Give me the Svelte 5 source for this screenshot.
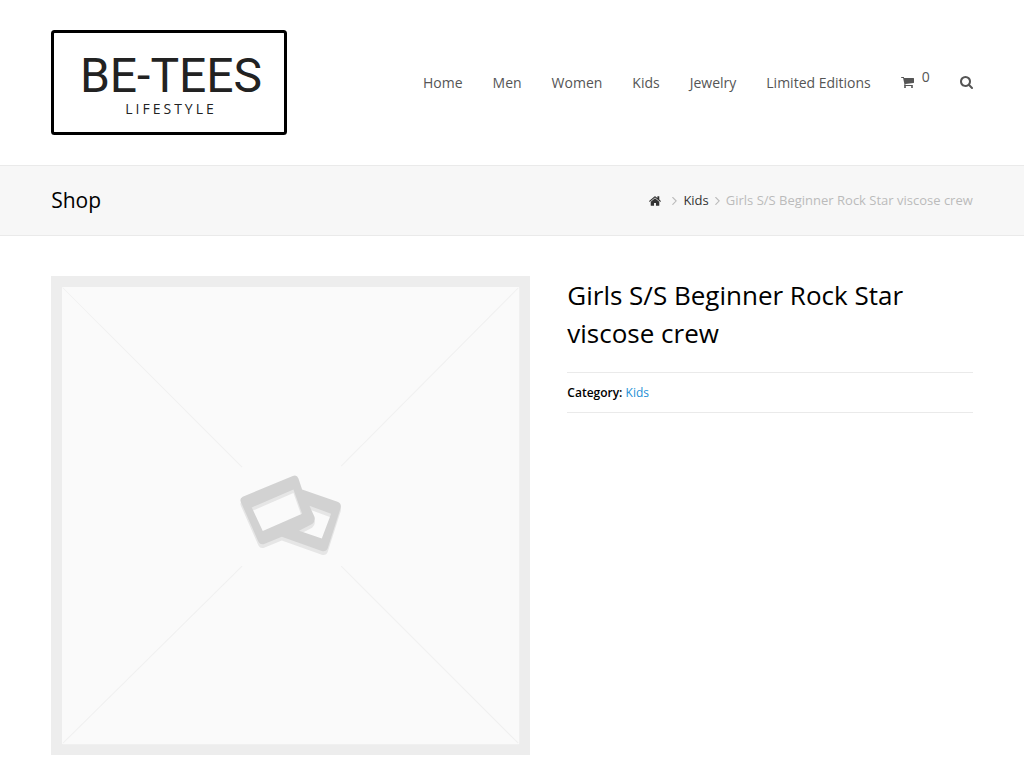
<script>
  const nav = ['Home', 'Men', 'Women', 'Kids', 'Jewelry', 'Limited Editions'];
  const product = 'Girls S/S Beginner Rock Star viscose crew';
  const cards =
    'M68 125L218 63Q230 58 235 70L246 103L352 140Q364 145 362 157L323 279Q318 291 305 288L185 245L134 266Q121 271 115 260L62 140Q58 130 68 125Z' +
    'M95 157L128 228L246 176L220 103Z' +
    'M268 152L283 185Q287 198 276 207L237 227L305 250L333 176Z';
</script>

{#snippet angle()}
  <svg class="angle" viewBox="589 484 582 975" aria-hidden="true"><path d="M1171 960q0 13-10 23l-466 466q-10 10-23 10t-23-10l-50-50q-10-10-10-23t10-23l393-393-393-393q-10-10-10-23t10-23l50-50q10-10 23-10t23 10l466 466q10 10 10 23z" /></svg>
{/snippet}

<header class="wrap header">
  <a class="logo" href="#home" aria-label="BE-TEES Lifestyle">
    <svg viewBox="0 0 236 105">
      <rect x="1.5" y="1.5" width="233" height="102" rx="2" fill="none" stroke="#000" stroke-width="3" />
      <text class="brand" x="120" y="62" text-anchor="middle">BE-TEES</text>
      <text class="tag" x="120" y="84" text-anchor="middle">LIFESTYLE</text>
    </svg>
  </a>
  <nav class="nav" aria-label="Main">
    {#each nav as item}
      <a href="#{item}">{item}</a>
    {/each}
    <a class="cart" href="#cart" aria-label="Cart, 0 items">
      <svg width="13" height="11" viewBox="0 256 1664 1408" aria-hidden="true"><path d="M640 1536q0 52-38 90t-90 38-90-38-38-90 38-90 90-38 90 38 38 90zm896 0q0 52-38 90t-90 38-90-38-38-90 38-90 90-38 90 38 38 90zm128-1088v512q0 24-16.5 42.5t-40.5 21.5l-1044 122q13 60 13 70 0 16-24 64h920q26 0 45 19t19 45-19 45-45 19h-1024q-26 0-45-19t-19-45q0-11 8-31.5t16-36 21.5-40 15.5-29.5l-177-823h-204q-26 0-45-19t-19-45 19-45 45-19h256q16 0 28.5 6.5t19.5 15.5 13 24.5 8 26 5.5 29.5 4.5 26h1201q26 0 45 19t19 45z" /></svg>
      <span class="count">0</span>
    </a>
    <button class="search" type="button" aria-label="Search">
      <svg width="13" height="13" viewBox="0 128 1664 1664" aria-hidden="true"><path d="M1152 832q0-185-131.5-316.5t-316.5-131.5-316.5 131.5-131.5 316.5 131.5 316.5 316.5 131.5 316.5-131.5 131.5-316.5zm512 832q0 52-38 90t-90 38q-54 0-90-38l-343-342q-179 124-399 124-143 0-273.5-55.5t-225-150-150-225-55.5-273.5 55.5-273.5 150-225 225-150 273.5-55.5 273.5 55.5 225 150 150 225 55.5 273.5q0 220-124 399l343 343q37 37 37 90z" /></svg>
    </button>
  </nav>
</header>

<section class="wrap titlebar">
  <h2>Shop</h2>
  <nav class="crumbs" aria-label="Breadcrumb">
    <a class="home" href="#home" aria-label="Home">
      <svg width="12" height="10" viewBox="89 253 1614 1283" aria-hidden="true"><path d="M1472 992v480q0 26-19 45t-45 19h-384v-384h-256v384h-384q-26 0-45-19t-19-45v-480q0-1 .5-3t.5-3l575-474 575 474q1 2 1 6zm223-69l-62 74q-8 9-21 11h-3q-13 0-21-7l-692-577-692 577q-12 8-24 7-13-2-21-11l-62-74q-8-10-7-23.5t11-21.5l719-599q32-26 76-26t76 26l244 204v-195q0-14 9-23t23-9h192q14 0 23 9t9 23v408l219 182q10 8 11 21.5t-7 23.5z" /></svg>
    </a>
    {@render angle()}
    <a href="#kids">Kids</a>
    {@render angle()}
    <span>{product}</span>
  </nav>
</section>

<main class="wrap product">
  <div class="photo">
    <svg viewBox="0 0 479 479" role="img" aria-label="Awaiting product image">
      <rect width="479" height="479" fill="#ededed" />
      <rect x="11" y="11" width="457" height="457" rx="1" fill="#fafafa" />
      <path d="M12 12L191 191M467 12L290 190M12 467L191 290M467 467L290 290" fill="none" stroke="#f0f0f0" />
      <g transform="translate(169 179) scale(.3333)" fill-rule="evenodd">
        <path transform="translate(0 11)" fill="#e6e6e6" d={cards} />
        <path fill="#d2d2d2" d={cards} />
      </g>
    </svg>
  </div>
  <div class="summary">
    <h1>{product}</h1>
    <p class="meta"><strong>Category:</strong> <a href="#kids">Kids</a></p>
  </div>
</main>

<style>
  :global(body) {
    margin: 0;
    background: #fff;
    color: #000;
    font-family: 'Open Sans', sans-serif;
  }
  a {
    color: inherit;
    text-decoration: none;
  }
  svg {
    display: block;
    fill: currentColor;
  }
  h1, h2, p {
    margin: 0;
    font-weight: 400;
  }
  .wrap {
    display: flex;
    justify-content: space-between;
    padding-inline: 5%;
  }
  .header {
    align-items: center;
    padding-block: 30px;
  }
  .logo svg {
    width: 236px;
  }
  .brand {
    font: 48px Roboto, sans-serif;
    font-kerning: none;
    fill: #222;
  }
  .tag {
    font: 14px 'Open Sans', sans-serif;
    letter-spacing: 3px;
    fill: #222;
  }
  .nav {
    display: flex;
    align-items: center;
    gap: 30px;
    font-size: 14px;
    line-height: 20px;
    color: #555;
  }
  .cart {
    display: flex;
    align-items: center;
    gap: 8px;
  }
  .count {
    padding-bottom: 12px;
  }
  .search {
    padding: 0;
    border: 0;
    background: none;
    color: inherit;
  }
  .titlebar {
    align-items: center;
    padding-block: 20px;
    border-block: 1px solid #eaeaea;
    background: #f7f7f7;
  }
  h2 {
    font-size: 21px;
    line-height: 29px;
  }
  .crumbs {
    display: flex;
    align-items: center;
    gap: 6px;
    font-size: 13px;
    line-height: 19px;
    color: #bbb;
  }
  .crumbs a {
    color: #333;
  }
  .crumbs .home {
    margin-right: 5px;
  }
  .angle {
    height: 8px;
    width: 5px;
  }
  .product {
    padding-block: 40px;
  }
  .photo {
    width: 52%;
  }
  .summary {
    width: 44%;
  }
  h1 {
    margin-bottom: 20px;
    font-size: 26px;
    line-height: 38px;
  }
  .meta {
    padding-block: 10px;
    border-block: 1px solid #eaeaea;
    font-size: 12px;
    line-height: 19px;
  }
  .meta strong {
    font-weight: 600;
  }
  .meta a {
    color: #1e8fd5;
  }
</style>
